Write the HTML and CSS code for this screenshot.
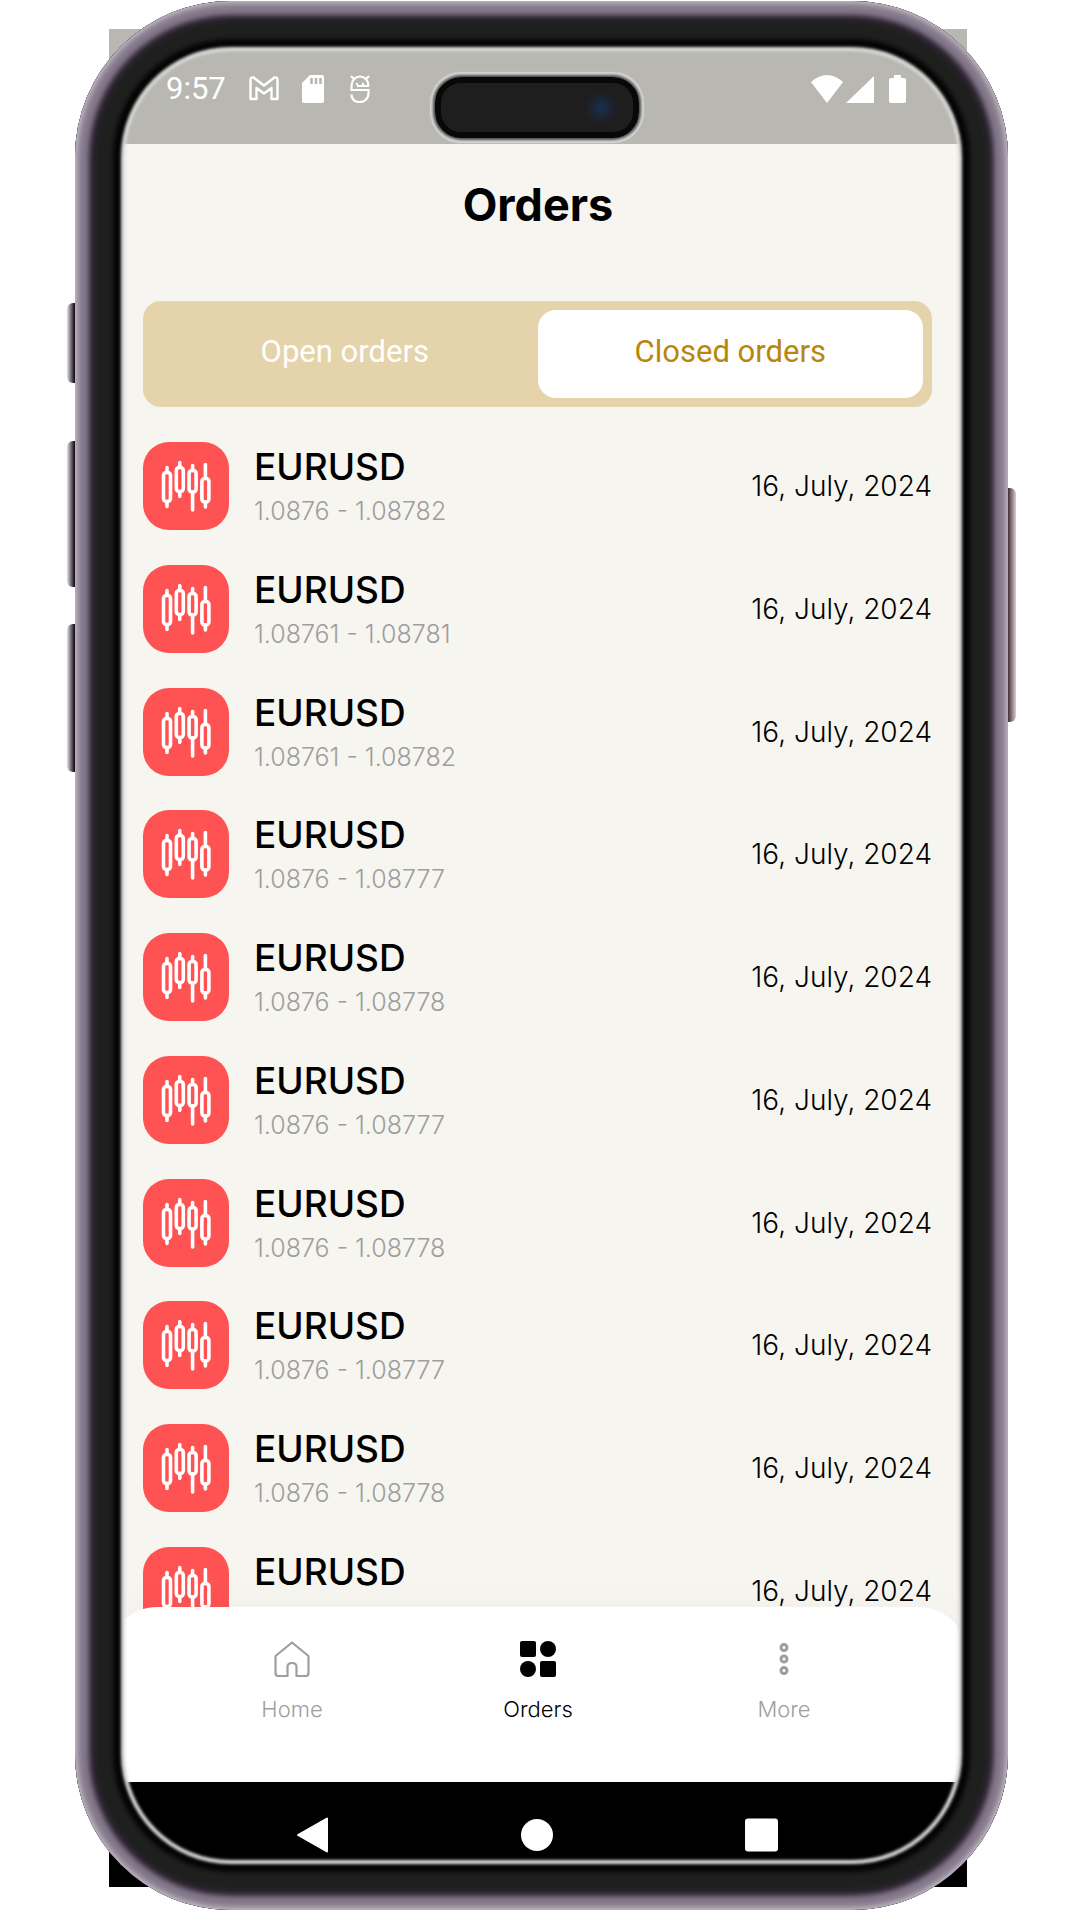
FILE: index.html
```
<!DOCTYPE html>
<html lang="en">
<head>
  <meta charset="UTF-8">
  <meta name="viewport" content="width=device-width, initial-scale=1.0">
  <title>Orders</title>
  <link rel="stylesheet" href="styles.css">
</head>
<body>
  <svg class="sprite" aria-hidden="true">
    <symbol id="candles" viewBox="0 0 86 88">
      <g fill="none" stroke="#fff" stroke-width="3.6" stroke-linecap="round">
        <rect x="20.5" y="30.5" width="7" height="29" rx="3"/>
        <path d="M24 25.5v5M24 59.5v5"/>
        <rect x="33.3" y="25.5" width="7" height="24" rx="3"/>
        <path d="M36.8 20.5v5M36.8 49.5v5"/>
        <rect x="46.1" y="28.5" width="7" height="21.5" rx="3"/>
        <path d="M49.6 23.5v5M49.6 50v18"/>
        <rect x="58.9" y="36.5" width="7" height="23.5" rx="3"/>
        <path d="M62.4 22.5v14M62.4 60v5"/>
      </g>
    </symbol>
  </svg>

  <div class="phone">
    <div class="screen">
      <div class="status-bar">
        <div class="status-left">
          <span class="clock">9:57</span>
          <svg width="32" height="28" viewBox="0 0 32 28" fill="none" stroke="#fff" stroke-width="2.4" stroke-linejoin="round"><path d="M2.500 24V5q0-3 3-2.500L16 10.500l10.500-8q3-.5 3 2.500v19H23.500V13L16 18.500 8.500 13v11z"/></svg>
          <svg width="22" height="28" viewBox="0 0 22 28"><path fill="#fff" d="M8 0h12q2 0 2 2v24q0 2-2 2H2q-2 0-2-2V8z"/><path stroke="#b8b7b2" stroke-width="2.6" d="M9.500 3v6M14 3v6M18.500 3v6"/></svg>
          <svg width="24" height="28" viewBox="-4 0 24 28" fill="none" stroke="#fff" stroke-width="2.2"><path d="M1 1l3 3M19 1l-3 3M18.500 10.500C18 -1.500 2 -1.500 1.500 10.500v4.500h17v3c0 12-17 12-17 1.500"/><path d="M7 8v2.200M13 8v2.200M7 11h12"/></svg>
        </div>
        <div class="status-right">
          <svg width="96" height="28" viewBox="0 0 96 28" fill="#fff"><path d="M0 7q16-14 32 0L16 28z"/><path d="M35 28L63 1v27z"/><path d="M83 0h7v3h3q2 0 2 2v21q0 2-2 2H80q-2 0-2-2V5q0-2 2-2h3z"/></svg>
        </div>
      </div>

      <h1>Orders</h1>

      <div class="tabs">
        <button class="tab">Open orders</button>
        <button class="tab active">Closed orders</button>
      </div>

      <ul class="orders">
        <li class="order">
          <svg class="order-icon"><use href="#candles"/></svg>
          <div class="order-info"><span class="pair">EURUSD</span><span class="price">1.0876 - 1.08782</span></div>
          <span class="date">16, July, 2024</span>
        </li>
        <li class="order">
          <svg class="order-icon"><use href="#candles"/></svg>
          <div class="order-info"><span class="pair">EURUSD</span><span class="price">1.08761 - 1.08781</span></div>
          <span class="date">16, July, 2024</span>
        </li>
        <li class="order">
          <svg class="order-icon"><use href="#candles"/></svg>
          <div class="order-info"><span class="pair">EURUSD</span><span class="price">1.08761 - 1.08782</span></div>
          <span class="date">16, July, 2024</span>
        </li>
        <li class="order">
          <svg class="order-icon"><use href="#candles"/></svg>
          <div class="order-info"><span class="pair">EURUSD</span><span class="price">1.0876 - 1.08777</span></div>
          <span class="date">16, July, 2024</span>
        </li>
        <li class="order">
          <svg class="order-icon"><use href="#candles"/></svg>
          <div class="order-info"><span class="pair">EURUSD</span><span class="price">1.0876 - 1.08778</span></div>
          <span class="date">16, July, 2024</span>
        </li>
        <li class="order">
          <svg class="order-icon"><use href="#candles"/></svg>
          <div class="order-info"><span class="pair">EURUSD</span><span class="price">1.0876 - 1.08777</span></div>
          <span class="date">16, July, 2024</span>
        </li>
        <li class="order">
          <svg class="order-icon"><use href="#candles"/></svg>
          <div class="order-info"><span class="pair">EURUSD</span><span class="price">1.0876 - 1.08778</span></div>
          <span class="date">16, July, 2024</span>
        </li>
        <li class="order">
          <svg class="order-icon"><use href="#candles"/></svg>
          <div class="order-info"><span class="pair">EURUSD</span><span class="price">1.0876 - 1.08777</span></div>
          <span class="date">16, July, 2024</span>
        </li>
        <li class="order">
          <svg class="order-icon"><use href="#candles"/></svg>
          <div class="order-info"><span class="pair">EURUSD</span><span class="price">1.0876 - 1.08778</span></div>
          <span class="date">16, July, 2024</span>
        </li>
        <li class="order">
          <svg class="order-icon"><use href="#candles"/></svg>
          <div class="order-info"><span class="pair">EURUSD</span></div>
          <span class="date">16, July, 2024</span>
        </li>
      </ul>

      <nav class="bottom-nav">
        <a href="#home">
          <svg width="36" height="36" viewBox="0 0 36 36" fill="none" stroke="#9e9e9e" stroke-width="2.2" stroke-linejoin="round"><path d="M18 1.500L1.500 15v17q0 3 3 3h9V26q0-4 4.500-4t4.500 4v9h9q3 0 3-3V15z"/></svg>
          Home
        </a>
        <a href="#orders" class="current">
          <svg width="36" height="36" viewBox="0 0 36 36"><rect x="0" y="0" width="16" height="16" rx="2"/><circle cx="28" cy="8" r="8"/><circle cx="8" cy="28" r="8"/><rect x="20" y="20" width="16" height="16" rx="2"/></svg>
          Orders
        </a>
        <a href="#more">
          <svg width="36" height="36" viewBox="0 0 36 36" fill="none" stroke="#9e9e9e" stroke-width="3"><circle cx="18" cy="6.500" r="3"/><circle cx="18" cy="18" r="3"/><circle cx="18" cy="29.500" r="3"/></svg>
          More
        </a>
      </nav>

      <div class="system-bar">
        <button aria-label="Back"><svg width="36" height="36" viewBox="0 0 36 36"><path fill="#fff" stroke="#fff" stroke-width="2" stroke-linejoin="round" d="M4 18L33 1.500v33z"/></svg></button>
        <button aria-label="Home"><svg width="36" height="36" viewBox="0 0 36 36"><circle cx="18" cy="18" r="16" fill="#fff"/></svg></button>
        <button aria-label="Recent apps"><svg width="36" height="36" viewBox="0 0 36 36"><rect x="1" y="1.500" width="33" height="33" rx="3" fill="#fff"/></svg></button>
      </div>
    </div>

    <div class="side-button mute"></div>
    <div class="side-button volume-up"></div>
    <div class="side-button volume-down"></div>
    <div class="side-button power"></div>
    <div class="frame"></div>
    <div class="island"></div>
  </div>
</body>
</html>
```
FILE: styles.css
```
* {
  box-sizing: border-box;
}

body {
  margin: 0;
  background: #fff;
  font-family: Inter, "Open Sans", sans-serif;
}

.sprite {
  position: absolute;
  width: 0;
  height: 0;
}

.phone {
  position: relative;
  display: flex;
  min-height: 100vh;
  padding: 29px 113px 33px 109px;
}

.screen {
  flex: 1;
  display: flex;
  flex-direction: column;
  background: #f6f5f0;
}

/* status bar */
.status-bar {
  display: flex;
  justify-content: space-between;
  height: 115px;
  padding: 44px 60px 0 57px;
  background: #b8b7b2;
}

.status-left,
.status-right {
  display: flex;
  align-items: center;
  gap: 22px;
  height: 32px;
}

.clock {
  color: #fff;
  font: 31px/32px Roboto, sans-serif;
}

h1 {
  margin: 0;
  padding: 33px 0 68px;
  font-size: 45px;
  line-height: 56px;
  font-weight: 700;
  text-align: center;
}

/* tabs */
.tabs {
  display: flex;
  margin: 0 35px 18px 34px;
  padding: 9px;
  border-radius: 18px;
  background: #e5d3ab;
}

.tab {
  flex: 1;
  height: 88px;
  padding: 0 0 6px;
  border: none;
  border-radius: 18px;
  background: none;
  color: #fff;
  font: 31px Roboto, sans-serif;
  cursor: pointer;
}

.tab.active {
  background: #fff;
  color: #b8860b;
}

/* order list */
.orders {
  flex: 1;
  display: grid;
  grid-auto-rows: 1fr;
  margin: 0;
  padding: 0 35px 0 34px;
  list-style: none;
}

.order {
  display: flex;
  align-items: center;
}

.order-icon {
  width: 86px;
  height: 88px;
  border-radius: 26px;
  background: #ff5252;
}

.order-info {
  flex: 1;
  display: flex;
  flex-direction: column;
  height: 88px;
  padding: 3px 0 0 25px;
}

.pair {
  font-size: 37px;
  line-height: 44px;
  font-weight: 500;
}

.price {
  color: #9e9e9e;
  font-size: 25px;
  line-height: 44px;
  font-weight: 300;
}

.date {
  font-size: 28px;
  font-weight: 300;
}

/* bottom navigation */
.bottom-nav {
  position: relative;
  display: flex;
  height: 175px;
  margin-top: -45px;
  padding: 34px 60px 0;
  border-radius: 48px 48px 0 0;
  background: #fff;
  box-shadow: 0 -8px 40px rgba(0, 0, 0, 0.02);
}

.bottom-nav a {
  flex: 1;
  display: flex;
  flex-direction: column;
  align-items: center;
  gap: 18px;
  color: #9e9e9e;
  font-size: 22px;
  line-height: 28px;
  font-weight: 300;
  text-decoration: none;
}

.bottom-nav .current {
  color: #000;
}

.system-bar {
  display: flex;
  height: 105px;
  padding: 35px 93px 0 91px;
  background: #000;
}

.system-bar button {
  flex: 1;
  height: 36px;
  padding: 0;
  border: none;
  background: none;
}

/* phone body, drawn over the screen edges */
.frame {
  position: absolute;
  top: 1px;
  right: 72px;
  bottom: 10px;
  left: 75px;
  border-radius: 156px;
  pointer-events: none;
  box-shadow:
    inset 0 0 6px 2px #cdc7cf,
    inset 0 0 5px 14px #84788a,
    inset 0 0 6px 19px #34283a,
    inset 0 0 4px 38px #1e201e,
    inset 0 0 3px 46px #050505,
    inset 0 0 3px 50px #dcdcda;
}

.island {
  position: absolute;
  top: 77px;
  right: 6px;
  left: 0;
  width: 204px;
  height: 61px;
  margin: 0 auto;
  border: 6px solid #080808;
  border-radius: 26px;
  background: radial-gradient(circle at 160px 25px, #17304f 0, #1e1e1e 16px);
  box-shadow: 0 0 3px 2px #444, 0 0 1px 5px #dcdcda;
}

.side-button {
  position: absolute;
  left: 67px;
  width: 12px;
  border-radius: 6px 0 0 6px;
  background: linear-gradient(to right, #e4e0e6, #1c1220 60%);
}

.mute {
  top: 303px;
  height: 80px;
}

.volume-up {
  top: 441px;
  height: 146px;
}

.volume-down {
  top: 624px;
  height: 148px;
}

.power {
  top: 488px;
  right: 64px;
  left: auto;
  height: 234px;
  width: 14px;
  border-radius: 0 6px 6px 0;
  background: linear-gradient(to right, #84788a, #3c2430 40%, #d8cdd2);
}
```
